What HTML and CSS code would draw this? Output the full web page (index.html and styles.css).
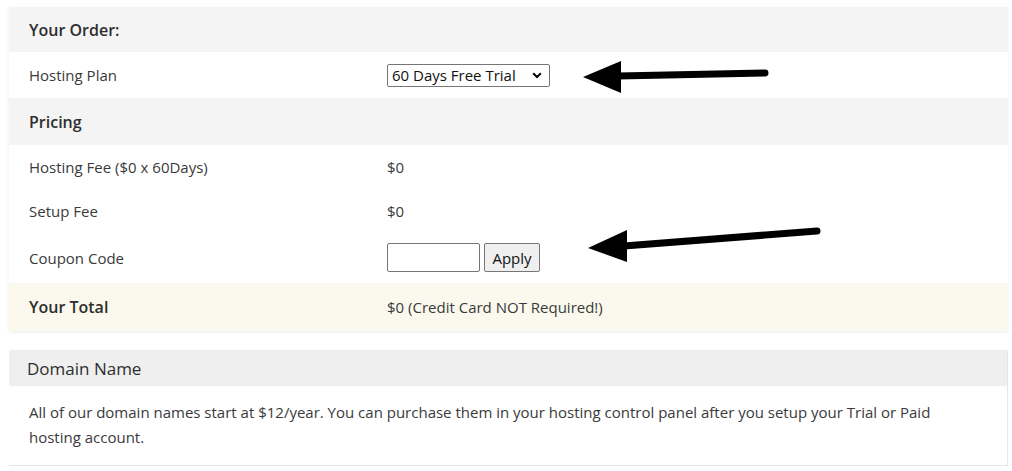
FILE: index.html
```html
<!DOCTYPE html>
<html lang="en">
<head>
<meta charset="utf-8">
<title>Your Order</title>
<link rel="stylesheet" href="styles.css">
</head>
<body>
<div class="page">
  <div class="order">
    <div class="row head r1"><span class="h">Your Order:</span></div>
    <div class="row r2">
      <span class="label">Hosting Plan</span>
      <span class="value">
        <span class="selwrap">
          <select class="sel"><option>60 Days Free Trial</option></select>
          <svg class="chev" width="10" height="7" viewBox="0 0 10 7"><path d="M1.2 1.2 L5 5 L8.8 1.2" fill="none" stroke="#000" stroke-width="2"/></svg>
        </span>
      </span>
    </div>
    <div class="row head r3"><span class="h">Pricing</span></div>
    <div class="row r4">
      <span class="label">Hosting Fee ($0 x 60Days)</span>
      <span class="value">$0</span>
    </div>
    <div class="row r5">
      <span class="label">Setup Fee</span>
      <span class="value">$0</span>
    </div>
    <div class="row coupon">
      <span class="label">Coupon Code</span>
      <span class="value"><input class="code" type="text"><button class="apply">Apply</button></span>
    </div>
    <div class="row total">
      <span class="label h">Your Total</span>
      <span class="value">$0 (Credit Card NOT Required!)</span>
    </div>

    <svg class="arrow a1" width="200" height="40" viewBox="0 0 200 40">
      <line x1="35" y1="19" x2="182" y2="16" stroke="#000" stroke-width="7" stroke-linecap="round"/>
      <polygon points="0,20 38,4 38,36" fill="#000"/>
    </svg>
    <svg class="arrow a2" width="240" height="40" viewBox="0 0 240 40">
      <line x1="36" y1="22" x2="229" y2="7" stroke="#000" stroke-width="7" stroke-linecap="round"/>
      <polygon points="0,24 39,6 39,38" fill="#000"/>
    </svg>
  </div>

  <div class="domain">
    <div class="dhead">Domain Name</div>
    <div class="dbody">All of our domain names start at $12/year. You can purchase them in your hosting control panel after you setup your Trial or Paid hosting account.</div>
  </div>
</div>
</body>
</html>
```

FILE: styles.css
```css
html, body {
  margin: 0;
  padding: 0;
  background: #fff;
}
body {
  font-family: "Open Sans", "Noto Sans", sans-serif;
  font-size: 15px;
  color: #3a3a3a;
}
.page {
  padding: 7px 4px 0 9px;
}
.order {
  position: relative;
  width: 999px;
  background: #fff;
  box-shadow: 0 1px 3px rgba(0,0,0,0.08);
}
.row {
  display: flex;
  align-items: center;
  height: 45px;
  padding-left: 20px;
}
.row.head {
  background: #f4f4f4;
}
.r1 { height: 45px; }
.r2 { height: 46px; }
.r3 { height: 47px; }
.r4 { height: 44px; }
.r5 { height: 43px; }
.row.coupon {
  height: 51px;
}
.row.total {
  background: #fbf9ee;
  height: 48px;
}
.h {
  font-size: 16px;
  font-weight: 600;
  color: #2e2e2e;
}
.label {
  width: 358px;
}
.value {
  display: flex;
  align-items: center;
}
.selwrap {
  position: relative;
  display: inline-block;
}
.sel {
  -webkit-appearance: none;
  appearance: none;
  width: 163px;
  height: 23px;
  border: 1px solid #767676;
  border-radius: 2px;
  background: #fff;
  font-family: inherit;
  font-size: 15px;
  color: #111;
  padding: 0 0 0 4px;
  margin: 0;
}
.chev {
  position: absolute;
  right: 8px;
  top: 8px;
  pointer-events: none;
}
.code {
  width: 93px;
  height: 29px;
  box-sizing: border-box;
  border: 1px solid #767676;
  border-radius: 2px;
  margin: 0 4px 0 0;
  padding: 0 4px;
  font-family: inherit;
}
.apply {
  height: 29px;
  box-sizing: border-box;
  width: 56px;
  border: 1px solid #767676;
  border-radius: 2px;
  background: #efefef;
  font-family: inherit;
  font-size: 15px;
  color: #111;
  padding: 0;
  margin: 0;
}
.arrow {
  position: absolute;
}
.a1 {
  left: 574px;
  top: 50px;
}
.a2 {
  left: 579px;
  top: 217px;
}
.domain {
  width: 998px;
  margin-top: 19px;
  border-right: 1px solid #e6e6e6;
  border-bottom: 1px solid #e6e6e6;
  background: #fff;
}
.dhead {
  height: 36px;
  display: flex;
  align-items: center;
  padding-left: 18px;
  background: #efefef;
  font-size: 17px;
  font-weight: 500;
  color: #2e2e2e;
}
.dbody {
  padding: 14px 60px 15px 20px;
  line-height: 25px;
}
```
